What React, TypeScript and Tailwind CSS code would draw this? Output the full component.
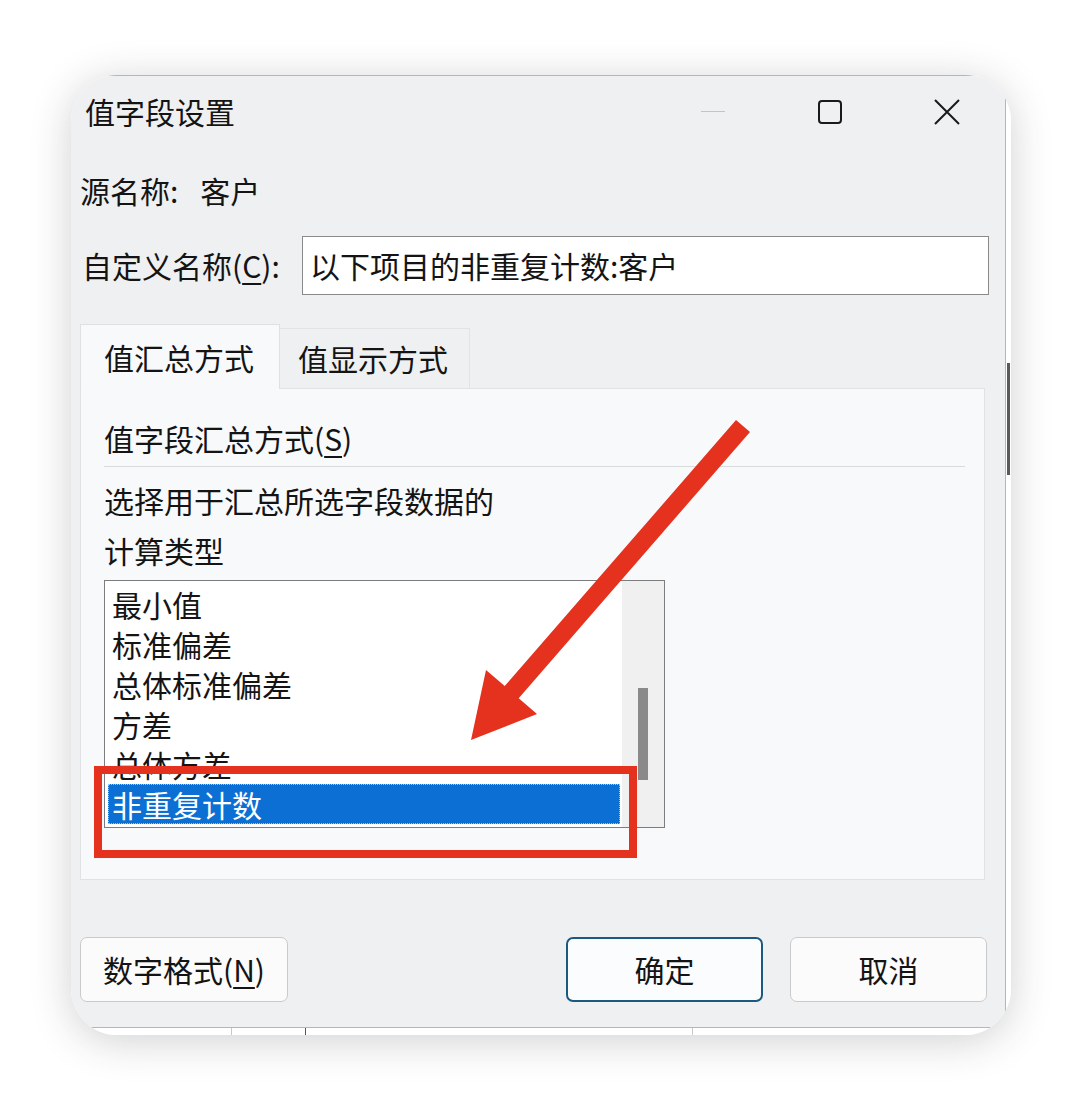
import React from "react";

const items = ["最小值", "标准偏差", "总体标准偏差", "方差", "总体方差"];

function Mnemonic({ text, letter, tail = ")" }: { text: string; letter: string; tail?: string }) {
  return (
    <span>
      {text}(<span className="underline underline-offset-[5px] decoration-[1.5px]">{letter}</span>
      {tail}
    </span>
  );
}

function TitleBar() {
  return (
    <div className="h-[71px] flex items-center">
      <span className="ml-[14px] text-[30px]">值字段设置</span>
      <div className="ml-auto flex h-full">
        <div className="w-[117px] flex items-center justify-center">
          <div className="w-[24px] h-[1.5px] bg-[#c4c4c4]" />
        </div>
        <div className="w-[117px] flex items-center justify-center">
          <div className="w-[24px] h-[24px] border-[2.5px] border-[#1a1a1a] rounded-[4px]" />
        </div>
        <div className="w-[117px] flex items-center justify-center">
          <svg width="28" height="28" viewBox="0 0 28 28">
            <path d="M2 2 L26 26 M26 2 L2 26" stroke="#1a1a1a" strokeWidth="2" fill="none" />
          </svg>
        </div>
      </div>
    </div>
  );
}

function ListBox() {
  return (
    <div className="mt-[5px] w-[561px] h-[248px] border border-[#7d7d7d] bg-white flex">
      <div className="flex-1 pt-[3px] overflow-hidden">
        {items.map((t) => (
          <div key={t} className="h-[40px] flex items-center pl-[7px] text-[30px] leading-none">
            {t}
          </div>
        ))}
        <div className="h-[40px] ml-[3px] mr-[2px] bg-[#0b6fd3] border border-dotted border-[#9cc4ee] flex items-center pl-[3px] text-[30px] text-white leading-none">
          非重复计数
        </div>
      </div>
      <div className="w-[42px] bg-[#f0f0f1] flex flex-col items-center">
        <div className="h-[107px]" />
        <div className="w-[10px] h-[92px] bg-[#8a8a8a]" />
      </div>
    </div>
  );
}

function Panel() {
  return (
    <div className="w-[905px] h-[492px] bg-[#f8f9fa] border border-[#e1e2e4] pl-[23px] pr-[19px]">
      <div className="mt-[29px] h-[40px] flex items-center text-[30px]">
        <Mnemonic text="值字段汇总方式" letter="S" />
      </div>
      <div className="mt-[8px] h-px bg-[#d9dadc]" />
      <div className="mt-[8px] text-[30px] leading-[50px]">
        <div>选择用于汇总所选字段数据的</div>
        <div>计算类型</div>
      </div>
      <ListBox />
    </div>
  );
}

export default function App() {
  return (
    <div className="relative w-[1084px] h-[1108px] bg-white pt-[75px] pl-[71px] text-[#141414] font-['Noto_Sans_CJK_SC','Microsoft_YaHei',sans-serif] overflow-hidden">
      <div className="w-[940px] h-[960px] rounded-[46px] overflow-hidden bg-white shadow-[0_6px_40px_rgba(40,44,52,0.22)] flex flex-col">
        <div className="flex h-[953px]">
          <div className="w-[935px] bg-[#eff0f2] border-t border-r border-b border-[#b4b6ba] flex flex-col">
            <TitleBar />

            {/* source name */}
            <div className="mt-[23px] h-[40px] flex items-center pl-[9px] text-[30px]">
              <span>源名称:</span>
              <span className="ml-[22px]">客户</span>
            </div>

            {/* custom name */}
            <div className="mt-[26px] h-[59px] flex items-center pl-[11px]">
              <div className="w-[220px] text-[30px]">
                <Mnemonic text="自定义名称" letter="C" tail="):" />
              </div>
              <div className="w-[687px] h-[59px] bg-white border border-[#8a8a8a] flex items-center pl-[7px] text-[30px]">
                以下项目的非重复计数:客户
              </div>
            </div>

            {/* tabs */}
            <div className="mt-[29px] pl-[9px] flex items-end">
              <div className="relative z-10 -mb-px w-[200px] h-[65px] bg-[#f8f9fa] border-t border-l border-r border-[#dfe0e2] flex items-center pl-[23px] text-[30px]">
                值汇总方式
              </div>
              <div className="w-[190px] h-[60px] bg-[#eff0f1] border-t border-r border-[#e2e3e5] flex items-center pl-[18px] text-[30px]">
                值显示方式
              </div>
            </div>
            <div className="pl-[9px]">
              <Panel />
            </div>

            {/* buttons */}
            <div className="mt-[57px] pl-[9px] flex">
              <button className="w-[208px] h-[65px] rounded-[7px] bg-[#fbfbfb] border border-[#c9cacc] text-[30px]">
                <Mnemonic text="数字格式" letter="N" />
              </button>
              <button className="ml-[278px] w-[197px] h-[65px] rounded-[7px] bg-[#fbfcfd] border-2 border-[#1b5a80] text-[30px]">
                确定
              </button>
              <button className="ml-[27px] w-[197px] h-[65px] rounded-[7px] bg-[#fbfbfb] border border-[#c9cacc] text-[30px]">
                取消
              </button>
            </div>
          </div>

          {/* strip of the sheet behind the dialog */}
          <div className="flex-1 bg-white flex flex-col items-start">
            <div className="h-[288px]" />
            <div className="ml-[1px] w-[3px] h-[112px] bg-[#5a5a5a]" />
          </div>
        </div>
        <div className="flex-1 bg-white flex">
          <div className="ml-[160px] w-px h-full bg-[#c8c8c8]" />
          <div className="ml-[73px] w-px h-full bg-[#555]" />
          <div className="ml-[386px] w-px h-full bg-[#c8c8c8]" />
        </div>
      </div>

      {/* annotation overlays */}
      <div className="absolute left-[94px] top-[766px] w-[543px] h-[92px] border-[8px] border-[#e5321f]" />
      <svg className="absolute left-0 top-0 pointer-events-none" width="1084" height="1108">
        <polygon
          points="736,420 750,432 518.7,698.2 537,714 471,740 486,670 504.7,686.1"
          fill="#e5321f"
        />
      </svg>
    </div>
  );
}
